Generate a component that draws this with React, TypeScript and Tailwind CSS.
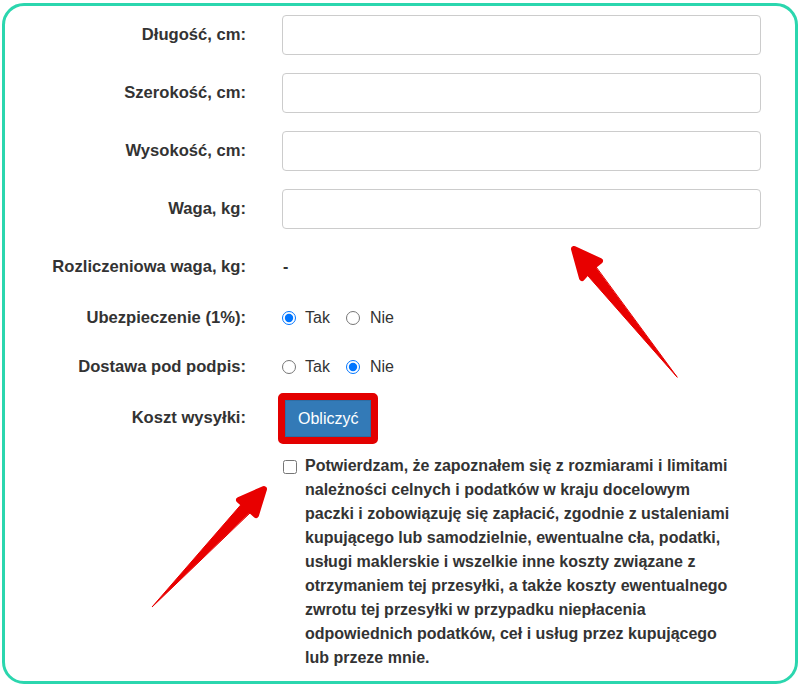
import React from 'react';

const FONT = { fontFamily: '"Liberation Sans", Arial, sans-serif' };

function Label({ children }: { children: React.ReactNode }) {
  return <div className="w-[241px] shrink-0 text-right font-bold text-[16.6px] text-[#333]">{children}</div>;
}

function InputRow({ label }: { label: string }) {
  return (
    <div className="flex items-center h-[40px] mb-[18px]">
      <Label>{label}</Label>
      <input type="text" className="ml-[36px] w-[479px] h-[40px] border border-[#ccc] rounded-[4px] bg-white outline-none" />
    </div>
  );
}

function Radios({ name, value }: { name: string; value: 'tak' | 'nie' }) {
  return (
    <div className="ml-[36px] flex items-center text-[16px] text-[#333]">
      <input type="radio" name={name} defaultChecked={value === 'tak'} className="m-0 w-[14px] h-[14px] mr-[9px]" />
      <span>Tak</span>
      <input type="radio" name={name} defaultChecked={value === 'nie'} className="m-0 w-[14px] h-[14px] ml-[16px] mr-[10px]" />
      <span>Nie</span>
    </div>
  );
}

export default function App() {
  return (
    <div className="relative w-[800px] h-[686px] bg-white pl-[2px] pt-[3px]" style={FONT}>
      <div className="w-[796px] h-[681px] border-[3px] border-[#2bd6ae] rounded-[22px] pt-[9px]">
        <InputRow label="Długość, cm:" />
        <InputRow label="Szerokość, cm:" />
        <InputRow label="Wysokość, cm:" />
        <InputRow label="Waga, kg:" />

        <div className="flex items-center h-[40px] mt-[2px] mb-[11px]">
          <Label>Rozliczeniowa waga, kg:</Label>
          <div className="ml-[37px] font-bold text-[16px] text-[#333]">-</div>
        </div>
        <div className="flex items-center h-[40px] mb-[9px]">
          <Label>Ubezpieczenie (1%):</Label>
          <Radios name="ins" value="tak" />
        </div>
        <div className="flex items-center h-[40px] mb-[6px]">
          <Label>Dostawa pod podpis:</Label>
          <Radios name="sig" value="nie" />
        </div>
        <div className="flex items-center h-[51px] mb-[10px]">
          <Label>Koszt wysyłki:</Label>
          <div className="ml-[32px] border-[7px] border-[#e30000] rounded-[5px]">
            <button className="h-[37px] px-[12px] bg-[#337ab7] border border-[#2e6da4] text-white text-[16px]">Obliczyć</button>
          </div>
        </div>

        <div className="flex">
          <div className="w-[241px] shrink-0" />
          <div className="ml-[37px] flex items-start">
            <input type="checkbox" className="m-0 mt-[6px] w-[14px] h-[14px] shrink-0" />
            <p className="ml-[8px] w-[430px] font-bold text-[16px] leading-[24px] text-[#333]">
              Potwierdzam, że zapoznałem się z rozmiarami i limitami należności celnych i podatków w kraju docelowym paczki i zobowiązuję się zapłacić, zgodnie z ustaleniami kupującego lub samodzielnie, ewentualne cła, podatki, usługi maklerskie i wszelkie inne koszty związane z otrzymaniem tej przesyłki, a także koszty ewentualnego zwrotu tej przesyłki w przypadku niepłacenia odpowiednich podatków, ceł i usług przez kupującego lub przeze mnie.
            </p>
          </div>
        </div>
      </div>

      <svg className="absolute inset-0 pointer-events-none" width="800" height="686" viewBox="0 0 800 686">
        <g fill="#e80000" stroke="#e80000" strokeLinejoin="round" strokeLinecap="round">
          <polygon points="593.7,264.3 584.3,271.7 677,377" strokeWidth="1" />
          <polygon points="574,249 600,261 590,269 582,278" strokeWidth="6" />
          <polygon points="250.8,511.7 242,503.5 152.3,606.7" strokeWidth="1" />
          <polygon points="264,489 239,500 247,507 256,515" strokeWidth="6" />
        </g>
      </svg>
    </div>
  );
}
